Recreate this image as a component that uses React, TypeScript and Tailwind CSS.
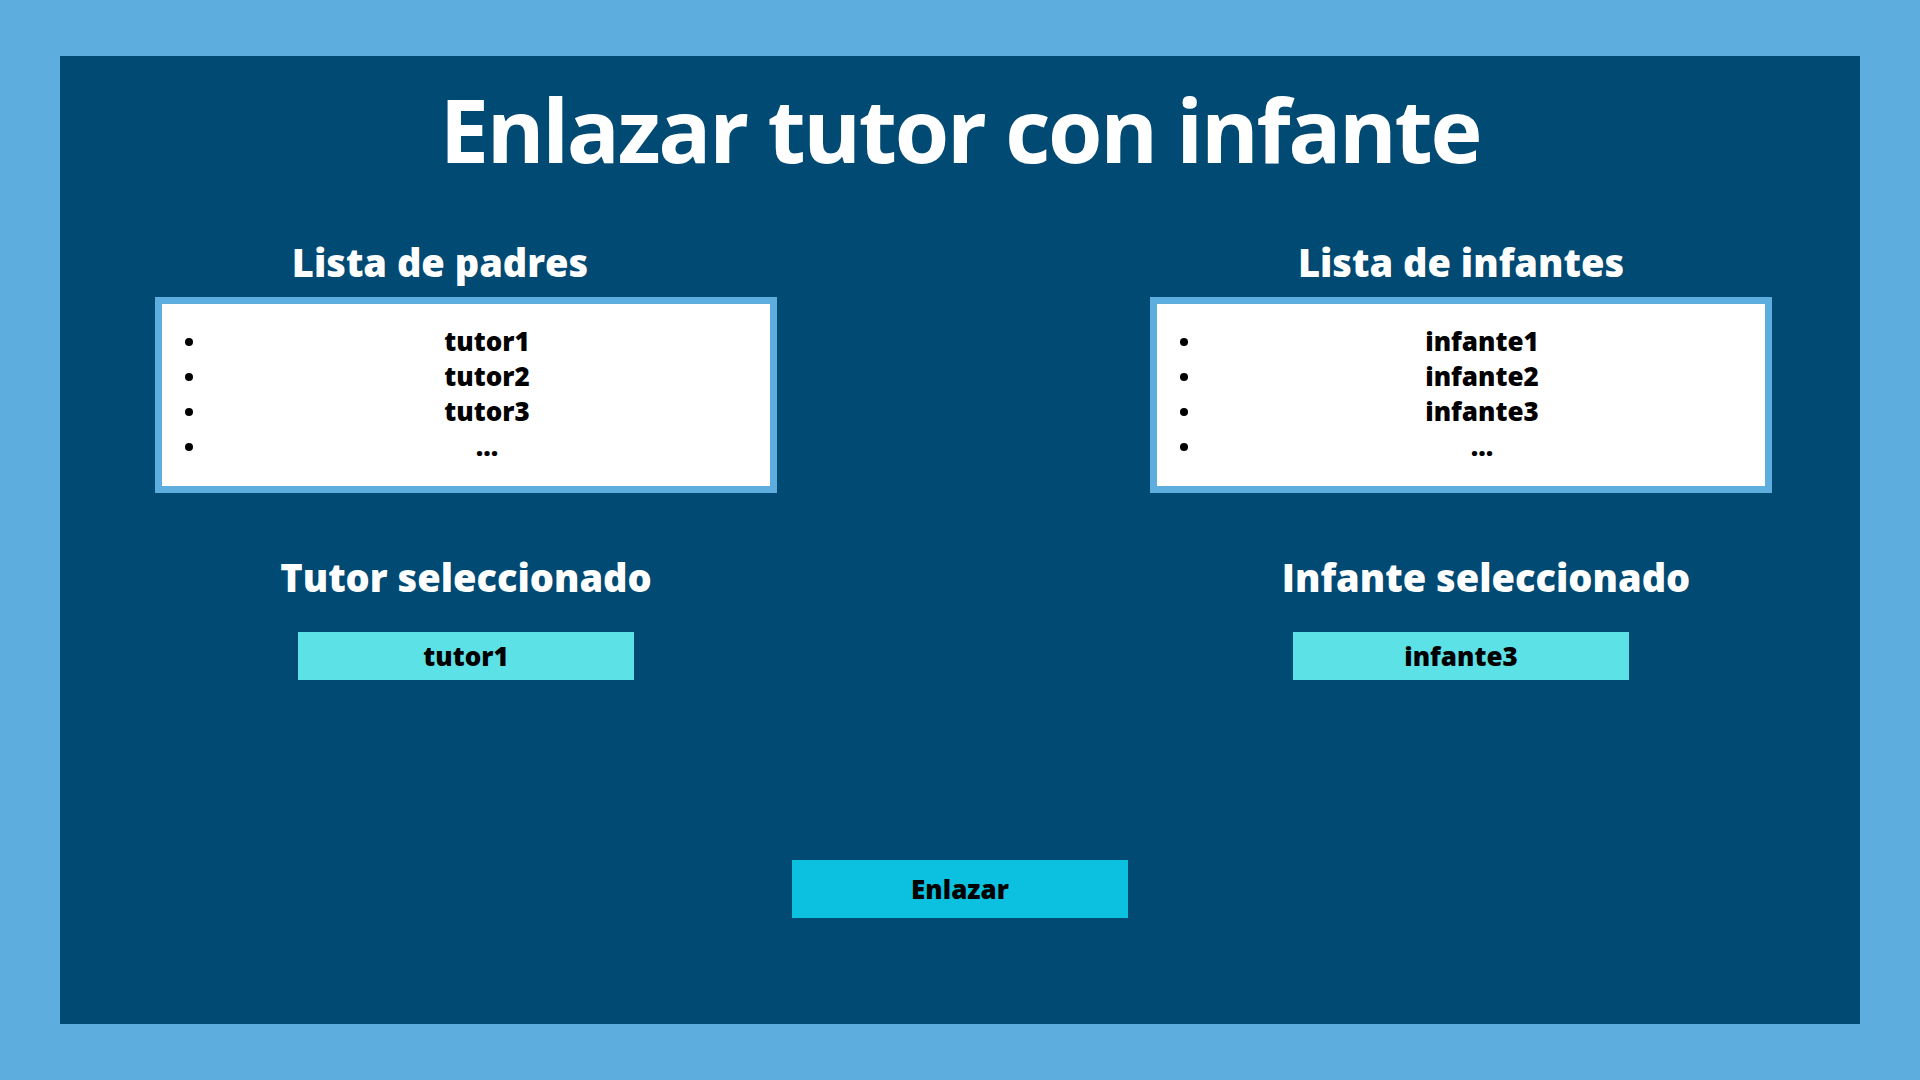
import React from 'react';

const ListPanel = ({
  title,
  items,
  titleShift,
  selectedTitle,
  selectedShift,
  selected,
}: {
  title: string;
  items: string[];
  titleShift: string;
  selectedTitle: string;
  selectedShift: string;
  selected: string;
}) => {
  return (
    <div className="w-[622px] flex flex-col items-center">
      <h2 className={`self-stretch text-center text-[38px] leading-[52px] font-extrabold text-white ${titleShift}`}>
        {title}
      </h2>
      <div className="mt-[9px] w-full h-[196px] border-[7px] border-[#5dadde] bg-white">
        <ul className="pl-[23px] pt-[20px] text-[26px] leading-[35px] font-extrabold text-black">
          {items.map((item, index) => (
            <li key={index} className="flex items-center">
              <span className="w-[8px] h-[8px] rounded-full bg-black shrink-0"></span>
              <span className="ml-[11px] flex-1 text-center">{item}</span>
            </li>
          ))}
        </ul>
      </div>
      <h2 className={`mt-[58px] self-stretch text-center text-[38px] leading-[52px] font-extrabold text-white ${selectedShift}`}>
        {selectedTitle}
      </h2>
      <div className="mt-[29px] w-[336px] h-[48px] bg-[#5ce1e6] flex items-center justify-center text-[26px] font-extrabold text-black">
        {selected}
      </div>
    </div>
  );
};

const App = () => {
  return (
    <div className="min-h-screen w-full bg-[#5dadde] px-[60px] pt-[56px] font-['Open_Sans',sans-serif]">
      <div className="h-[968px] bg-[#004a73] flex flex-col">
        {/* Title */}
        <h1 className="mt-[13px] text-center text-[88px] leading-[120px] font-bold tracking-[-2.3px] text-white">
          Enlazar tutor con infante
        </h1>

        {/* Two lists */}
        <div className="mt-[47px] flex justify-between pl-[95px] pr-[88px]">
          <ListPanel
            title="Lista de padres"
            items={['tutor1', 'tutor2', 'tutor3', '...']}
            titleShift="pr-[52px]"
            selectedTitle="Tutor seleccionado"
            selectedShift=""
            selected="tutor1"
          />
          <ListPanel
            title="Lista de infantes"
            items={['infante1', 'infante2', 'infante3', '...']}
            titleShift=""
            selectedTitle="Infante seleccionado"
            selectedShift="pl-[50px]"
            selected="infante3"
          />
        </div>

        {/* Link button */}
        <button className="mx-auto mt-[180px] w-[336px] h-[58px] bg-[#0cc0df] text-[26px] font-extrabold text-black">
          Enlazar
        </button>
      </div>
    </div>
  );
};

export default App;
